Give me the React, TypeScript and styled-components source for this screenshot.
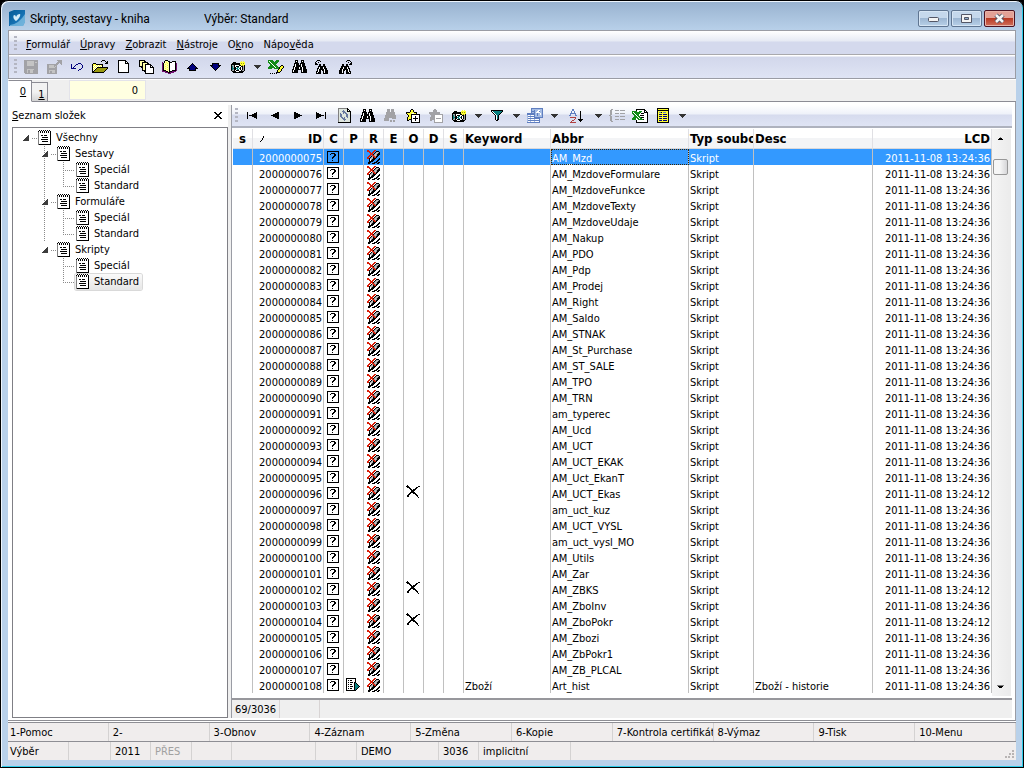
import React from 'react';
import styled, { createGlobalStyle, css } from 'styled-components';

const UI_FONT = '"DejaVu Sans Condensed", "Noto Sans", sans-serif';
const TITLE_FONT = 'Roboto, "Noto Sans", sans-serif';

const Global = createGlobalStyle`
  *, *::before, *::after { box-sizing: border-box; }
  body { margin: 0; background: #000; font: 11px/16px ${UI_FONT}; color: #000; }
  button, input { font: inherit; color: inherit; }
  svg { display: block; flex: none; }
`;

/* ---------- icons ---------- */

const PALETTE: Record<string, string> = {
  k: '#000000', w: '#ffffff', g: '#808080', l: '#c4c4c4', a: '#a2a2a6', y: '#ffff33', o: '#9a9a10',
  r: '#d81e08', b: '#00007c', t: '#0a8080', n: '#118a18', p: '#70106e', s: '#5f7ec0', c: '#a5bce4', d: '#b04040',
  v: '#ffffa8', m: '#dfe6df', q: '#6878a0',
};

// Odd widths and even heights keep centred icons on whole pixels inside the buttons.
const PixelIcon = ({ rows, mono }: { rows: string; mono?: string }) => {
  const lines = rows.trim().split(/\s+/);
  const drawn = Math.max(...lines.map((l) => l.length));
  const width = drawn + ((drawn + 1) % 2);
  const height = lines.length + (lines.length % 2);
  const rects: React.ReactNode[] = [];
  lines.forEach((line, y) => {
    for (let x = 0; x < line.length;) {
      const ch = line[x];
      let end = x + 1;
      while (line[end] === ch) end += 1;
      if (PALETTE[ch]) {
        const fill = mono && ch !== 'w' ? mono : PALETTE[ch];
        rects.push(<rect key={`${x}-${y}`} x={x} y={y} width={end - x} height={1} fill={fill} />);
      }
      x = end;
    }
  });
  return (
    <svg width={width} height={height} viewBox={`0 0 ${width} ${height}`} shapeRendering="crispEdges" aria-hidden="true">
      {rects}
    </svg>
  );
};

const SAVE = `
aaaaaaaaaaaaaa
aaalllllllaaaa
aaalllllllalla
aaalllllllaaaa
aaalllllllaaaa
aaalllllllaaaa
aaaaaaaaaaaaaa
aaaaaaaaaaaaaa
aaaaaaaaaaaaaa
aaalllllllaaaa
aaalaalllaaaaa
aaalaalllaaaaa
aaalaalllaaaaa
.aaaaaaaaaaaaa`;
const SAVE_OUT = `
..........aaaaa
...........aaaa
..........aaaaa
.........aaa.aa
aaaaaaaaaaa...a
aalllllaaa.....
aalllllala.....
aallllllaa.....
aaaaaaaaaa.....
aaaaaaaaaa.....
aallllllaa.....
aalaalllaa.....
aalaalllaa.....
aaaaaaaaaa.....`;
const UNDO = `
.......bbb..
b....bb...b.
b...b......b
b..b.......b
b.b........b
bbbbb.....b.
........bb..
.......b....`;
const OPEN = `
..........kkk...
.........k...k.k
..............kk
.kkk.........kkk
kyyykkkkkkk.....
kywywywywyk.....
kwywywywywk.....
kywywkkkkkkkkkkk
kwywkooooooooook
kywkooooooooook.
kwkooooooooook..
kkooooooooook...
kkkkkkkkkkkk....`;
const NEW_DOC = `
kkkkkkkk...
kwwwwwwkk..
kwwwwwwkwk.
kwwwwwwkkkk
kwwwwwwwwwk
kwwwwwwwwwk
kwwwwwwwwwk
kwwwwwwwwwk
kwwwwwwwwwk
kwwwwwwwwwk
kwwwwwwwwwk
kwwwwwwwwwk
kkkkkkkkkkk`;
const COPIES = `
kkkkkk.........
kvvvvkk........
kvvkkkkkk......
kvvkvvvvkk.....
kvvkvvkkkkkk...
kvvkvvkwwwwkk..
kkkkvvkwwwwkwk.
..kkvvkwwwwkkkk
...kvvkwwwwwwwk
...kvvkwwwwwwwk
...kkkkwwwwwwwk
.....kkwwwwwwwk
......kwwwwwwwk
......kkkkkkkkk`;
const BOOK = `
...kkk.........
..kvvvkk..kkkk.
p.kvyvvkkkwwwk.
pkvvvyvkwwwwwkp
pkvyvvvkwwwwwkp
pkvvvyvkwwwwwkp
pkvyvvvkwwwwwkp
pkvvvyvkwwwwwkp
pkvyvvvkwwwwwkp
pkvvvyvkwwwwwkp
pkkkvvvkwwkkkkp
ppppkkvkkkpppp.
...pppkkpppp...
......ppp......`;
const UP = `
......k......
.....kbk.....
....kbbbk....
...kbbbbbk...
..kbbbbbbbk..
.kkkbbbbbkkk.
...kbbbbbk...
...kkkkkkk...`;
const DOWN = UP.trim().split('\n').reverse().join('\n');
const CAMERA = `
..........y.y.
..kkk....yyyyy
.kkkkkkkkyoyoy
kkkkkkkkkyyyyy
kaakwwwwkkyoyk
ktakwkkkwwkkak
ktakkwttwkwkak
kttkkttwtkwkak
ktakkwttwkwkak
kaakwkkkwwkaak
.kkkkwwwkkkkk.
..kkkkkkkkkk..`;
const CARET = `
kkkkkkk
.kkkkk.
..kkk..
...k...`;
const SHEET_X = `
nnnnn...nnn.....
nwnnnn.nnnn.....
nnwnnnnnnn......
.nnwnnnnn.......
..nnwnnn........
..nnnwnnn....kk.
.nnnnnwnnn..kyyk
nnnnnnnwnnnkyyyk
nnnn..nnnnnkyyk.
..........kyyk..
.........kyyyk..
.........kyyk...
........kkkk....
..k.k.k.k.......`;
const BINOCULARS = `
...kkk...kkk...
...kwk...kwk...
...kkk...kkk...
..kkkkk.kkkkk..
..kwkkk.kwkkk..
..kwkkkkkwkkk..
.kkwkkkkkwkkkk.
.kwkkkkwkkwkkk.
.kwkkkkwkkwkkk.
kkwkkkkkkkwkkkk
kwkkkk...kwkkkk
kwkkkk...kwkkkk
kkkkkk...kkkkkk`;
const FIND_PREV = `
..kkk.........
.k...k........
k..k..........
kk............
kkk.kk..kk....
....kk..kk....
...kkkkkkkk...
...kwkkkwkk...
..kkwkkkwkkk..
..kwkkkkkwkk..
..kwkkwkkwkkk.
.kkwkk..kwkkk.
.kwkkk..kwkkk.
.kkkkk..kkkkk.`;
const FIND_NEXT = FIND_PREV.trim().split('\n').map((l) => l.split('').reverse().join('')).join('\n');
const FIND_MORE = `
...kkk.kkk..
...kkk.kkk..
...kkk.kkk..
..kkkkkkkkk.
..kkkkkkkkk.
..kkkkkkkkk.
.kkkkkkkkkkk
.kkkkkkkkkkk
.kkkkkkkkkkk
kkkkk...kkkk
kkkkk.......
kkkkk.kk.kk.
......kk.kk.`;
const PREV = `
......kk
....kkkk
..kkkkkk
kkkkkkkk
..kkkkkk
....kkkk
......kk`;
const NEXT = PREV.trim().split('\n').map((l) => l.split('').reverse().join('')).join('\n');
const FIRST = `
k........k
k......kkk
k....kkkkk
k.kkkkkkkk
k....kkkkk
k......kkk
k........k`;
const LAST = FIRST.trim().split('\n').map((l) => l.split('').reverse().join('')).join('\n');
const REFRESH = `
gggggggggk...
gmmmmmmmmkk..
gmmmmqmmmkwk.
gmmmqqqmmkkkk
gmmmmqqqmmmmk
gmqmmqmqqmmmk
gmqqmmmmqqmmk
gmqqmmmmqqmmk
gmqqmmmmqqmmk
gmmqqmqmmqmmk
gmmmqqqmmmmmk
gmmmmqqqmmmmk
gmmmmmqmmmmmk
gmmmmmmmmmmmk
kkkkkkkkkkkkk`;
const STAR_ADD = `
.....kk........
....kyyk.......
....kyyk.......
kkkkyyyykkk....
kyyyyywwyyk....
.kyyykkkkkkkkk.
..kyykwwwwwwwk.
..kyykwwwkwwwk.
.kyyykwwwkwwwk.
.kyyykwkkkkkwk.
.kykkkwwwkwwwk.
.kk..kwwwkwwwk.
.....kwwwwwwwk.
.....kkkkkkkkk.`;
const STAR_REMOVE = `
.....aa........
....aaaa.......
....aaaa.......
aaaaaaaaaaa....
aaaaaaaaaaa....
.aaaaaaaaaaaaa.
..aaaawwwwwwwa.
..aaaawwwwwwwa.
.aaaaawwwwwwwa.
.aaaaawaaaaawa.
.aaaaawwwwwwwa.
.aa..awwwwwwwa.
.....awwwwwwwa.
.....aaaaaaaaa.`;
const FILTER = `
kkkkkkkkkkkk
kwtttttttttk
.kwtttttttk.
..kwtttttk..
...kwtttk...
....kwtk....
....kwtk....
....kwtk....
....kwtk....
....kwkk....
.....kk.....`;
const WINDOWS = `
....ssssssssssss
....sccccccccccs
....sccscccwwccs
....ssssccwwsccs
....sccscwwwwccs
ssssssssccsccwcs
ssssssssccsccwcs
cwwcwwwsccsccccs
cssssssscccccccs
cwwcwwwsssssssss
cssssssssssss...
cwwcwwwcwwwws...
cssssssssssss...
cwwcwwwcwwwws...
sssssssssssss...`;
const SORT = `
....ss..........
....ss..........
...s..s.....k...
...s..s.....k...
..ssssss....k...
..s....s....k...
.ss....ss...k...
............k...
..dddddd....k...
.......d....k...
......d...kkkkk.
....dd.....kkk..
...d........k...
..dddddd........`;
const LIST = `
..aa............
.aa...aaaa.aaaaa
.aa.............
.aa.............
.aa...aaaa.aaaaa
.aa.............
aa..............
.aa...aaaa.aaaaa
.aa.............
.aa.............
.aa...aaaa.aaaaa
.aa.............
..aa............`;
const EXCEL = `
....kkkkkkkkk...
....kwwwwwwwkk..
nnnnnwwnnnwwkwk.
nwnnnnnnnwwwkkkk
nnwnnnnnwkkkwwwk
.nnwnnnwwwwwwwwk
..nnwnnwkkkkwwwk
..nnnwnnwwwwwwwk
.nnnnnwnnkkkwwwk
nnnnwnnwnnwwwwwk
nnnnwwnnnnnkwwwk
....kwwwwwwwwwwk
....kwwwwwwwwwwk
....kkkkkkkkkkkk`;
const TABLE = `
kkkkkkkkkkkk
kyyyyyyyyyyk
kkkkkkkkkkkk
kyyyyyyyyyyk
kysskysssyyk
kyyyyyyyyyyk
kybbbybbbbyk
kyyyyyyyyyyk
kybbbybbbbyk
kyyyyyyyyyyk
kybbbybbbbyk
kyyyyyyyyyyk
kybbbybbbbyk
kyyyyyyyyyyk
kkkkkkkkkkkk`;
const NOTEPAD = `
.k.k.k.k.k.k.
k.k.k.k.k.k.k
gwkwkwkwkwkwk
gwwwwwwwwwwwk
gwwwwwwwwwwwk
gwwkkwkkkwwwk
gwwwwwwwwwwwk
gwwwkkkkkkwwk
gwwwwwwwwwwwk
gwwkkkkkkkwwk
gwwwwwwwwwwwk
gwwwkkkkkkwwk
gwwwwwwwwwwwk
gwwwwwwwwwwwk
gkkkkkkkkkkkk`;
const QUESTION = `
kkkkkkkkkkkk
kwwwwwwwwwwk
kwwwkkkkwwwk
kwwkwwwkkwwk
kwwwwwwkkwwk
kwwwwwkkwwwk
kwwwwkkwwwwk
kwwwwkwwwwwk
kwwwwwwwwwwk
kwwwwkwwwwwk
kwwwwwwwwwwk
kkkkkkkkkkkk`;
const QUESTION_CLEAR = QUESTION.replace(/w/g, '.');
const READ_ONLY = `
rr.....rr.....
rrr...rr.kkk..
..rr.rr.kalak.
...rrr.kalakk.
...rrrkalakkk.
..rr.rralakk..
.rr.karrakk...
rr.kalkrrk....
rrkalakkk...k.
..kwakkk...kk.
..kwkkk...kk..
..kkkk...kk...
.kkk...kkk.kk.
.kk..kkk..kk..`;
const CROSS = `
.k............
kkk.........kk
.kkk......kk..
...kk....kk...
....kk.kkk....
.....kkkk.....
.....kkk......
....kkkkk.....
...kk..kkk....
..kk.....kk...
.kk.......kk..
.kk........k..
............k.
..............
..............
..............`;
const DOC_RUN = `
kkkkkkkkkk....
kwwwwwwwwk....
kwkwkkwwwk....
kwwwwwwwwk....
kwkwkkkwkk....
kwwwwwwwktk...
kwkwkkwwkttk..
kwwwwwwwktttk.
kwkwkkkwkttttk
kwwwwwwwktttk.
kwkwkkwwkttk..
kwwwwwwwktk...
kkkkkkkkkk....`;
const EXPANDED = `
.....k
....kk
...kkk
..kkkk
.kkkkk
kkkkkk`;
const CLOSE = `
kk....kk
.kk..kk.
..kkkk..
...kk...
..kkkk..
.kk..kk.
kk....kk`;
const SORT_MARK = `
...k..
...k..
..k...
..k...
.k....
k.....`;
const ARROW_UP = `
...g...
..kkk..
.kkkkk.`;
const ARROW_DOWN = `
ggggggg
.kkkkk.
..kkk..`;
const SIZE_DOTS = `
.......kk
.......kk
.........
....kk.kk
....kk.kk
.........
kk.kk..kk
kk.kk..kk`;

const AppLogo = () => (
  <svg width="16" height="16" viewBox="0 0 16 16" aria-hidden="true">
    <defs>
      <linearGradient id="logo" x1="0" y1="0" x2="1" y2="1">
        <stop offset="0" stopColor="#045a94" />
        <stop offset="0.6" stopColor="#1672b4" />
        <stop offset="1" stopColor="#4a9ad0" />
      </linearGradient>
    </defs>
    <path d="M0 2 L5 0 L16 0 L16 12 L14 16 L0 16Z" fill="url(#logo)" />
    <path d="M1 15 Q10 14 16 4 L16 12 L14 16 L1 16Z" fill="#7dbce0" opacity=".8" />
    <path d="M7 11 C4 9 4 6 5 5 Q7 5 7 7 Q8 4 11 4 C12 5 10 9 7 11Z" fill="#d4ecf8" />
  </svg>
);

/* ---------- window frame ---------- */

const Window = styled.div`
  min-height: 100vh;
  display: flex;
  flex-direction: column;
  padding: 0 7px 7px;
  border: 1px solid #000;
  border-radius: 8px 8px 0 0;
  background: linear-gradient(#98b2cf 0, #b9d1ea 30px) #b9d1ea;
  box-shadow: inset 1px 1px 0 #eef5fc, inset -1px -1px 0 #2bcbe8;
`;
const TitleBar = styled.header`
  display: flex;
  height: 29px;
  padding: 5px 0 0 1px;
  align-items: center;
  font: 12px/16px ${TITLE_FONT};
`;
const Title = styled.h1`
  width: 174px;
  margin: 0 0 0 5px;
  padding-top: 2px;
  font: inherit;
`;
const Selection = styled.span`
  flex: 1;
  padding-top: 2px;
`;
const WindowButtons = styled.div`
  display: flex;
  gap: 2px;
  padding-right: 1px;
`;
const WindowButton = styled.button<{ $danger?: boolean }>`
  width: 31px;
  height: 17px;
  padding: 0;
  display: grid;
  place-items: center;
  border: 1px solid ${(p) => (p.$danger ? '#4c1322' : '#5f7591')};
  border-radius: 2px;
  background: ${(p) => (p.$danger
    ? 'linear-gradient(#e3a196 0 45%, #b93a24 50%, #d0705c)'
    : 'linear-gradient(#c5d8ec 0 45%, #9db7d3 50%, #b8d0e8)')};
  box-shadow: inset 0 0 0 1px ${(p) => (p.$danger ? '#e9b3a8' : '#d6e5f4')};
`;
const Client = styled.div`
  flex: 1;
  display: flex;
  flex-direction: column;
  background: #fff;
`;

/* ---------- bars ---------- */

const Bars = styled.div`
  border: 1px solid #9a9ca4;
`;
const MenuBar = styled.nav`
  height: 24px;
  display: flex;
  align-items: center;
  padding: 3px 0 0 5px;
  border-bottom: 1px solid #a9a9ad;
  background: linear-gradient(#fff 0, #e6eaf4 10px, #d4d9ed 11px);
`;
const Grip = styled.span`
  width: 3px;
  height: 16px;
  margin-right: 3px;
  background: repeating-linear-gradient(#b4b6c2 0 2px, transparent 2px 4px);
`;
const MenuItem = styled.button`
  padding: 2px 0 0;
  margin: 0 4px 0 6px;
  border: 0;
  background: none;
`;
const ToolBar = styled.div<{ $inner?: boolean }>`
  height: 23px;
  display: flex;
  align-items: flex-start;
  padding: ${(p) => (p.$inner ? '1px 0 0 3px' : '2px 0 0 5px')};
  border-bottom: ${(p) => (p.$inner ? 2 : 0)}px solid #aeb2be;
  background: ${(p) => (p.$inner
    ? 'linear-gradient(#fff 0, #eef1f9 9px, #d6dbee 10px, #dfe4f4)'
    : 'linear-gradient(#fff 0 1px, #d2d7eb 2px, #dfe4f4)')};
  ${Grip} { margin-top: 2px; }
`;
const ToolButton = styled.button<{ $kind?: 'caret' | 'wide' }>`
  width: ${(p) => (p.$kind === 'caret' ? 15 : p.$kind === 'wide' ? 29 : 23)}px;
  height: 20px;
  padding: 0;
  display: grid;
  place-items: center;
  border: 0;
  background: none;
`;
const TabStrip = styled.div`
  height: 22px;
  display: flex;
  align-items: flex-end;
  margin-top: 1px;
  background: #efefef;
  box-shadow: inset 0 -1px 0 #8c8c94;
`;
const Tab = styled.button<{ $active?: boolean }>`
  width: ${(p) => (p.$active ? 24 : 16)}px;
  height: ${(p) => (p.$active ? 22 : 20)}px;
  padding: ${(p) => (p.$active ? '2px 1px 0 7px' : '4px 0 0 4px')};
  border: 1px solid #8c8c94;
  border-left-width: ${(p) => (p.$active ? 1 : 0)}px;
  border-left-color: #fff;
  border-bottom-color: ${(p) => (p.$active ? '#fff' : '#8c8c94')};
  background: ${(p) => (p.$active ? '#fff' : 'linear-gradient(#f2f2f2 50%, #d4d4d4)')};
`;
const RecordInput = styled.input`
  width: 77px;
  height: 20px;
  align-self: flex-start;
  margin-left: 21px;
  padding: 0 7px 0 0;
  border: 1px solid #e3e3ea;
  background: #ffffe1;
  text-align: right;
`;

/* ---------- workspace ---------- */

const Workspace = styled.main`
  flex: 1;
  display: grid;
  grid-template-columns: 220px 3px 1fr;
  padding: 3px 3px 2px 0;
  border-right: 1px solid #9a9ca4;
  border-bottom: 1px solid #8e8e94;
`;
const Folders = styled.section`
  display: flex;
  flex-direction: column;
  padding-left: 4px;
`;
const FoldersHead = styled.div`
  height: 22px;
  display: flex;
  align-items: center;
  justify-content: space-between;
  padding-right: 5px;
`;
const FoldersTitle = styled.h2`
  margin: 0;
  font: inherit;
`;
const CloseButton = styled.button`
  padding: 0;
  border: 0;
  background: none;
`;
const TreeBox = styled.div`
  flex: 1;
  padding: 2px 0 0 10px;
  border: 1px solid #7f7f85;
`;
const TreeList = styled.ul`
  list-style: none;
  margin: 0;
  padding: 0;
`;
const Branch = styled.li<{ $guide?: boolean }>`
  margin: 0 0 0 19px;
  background: ${(p) => (p.$guide
    ? 'repeating-linear-gradient(#8a8a8a 0 1px, transparent 1px 2px) 2px 0 / 1px 100% no-repeat' : 'none')};
`;
const TreeRow = styled.div<{ $level: number }>`
  height: 16px;
  display: flex;
  align-items: center;
  ${(p) => p.$level === 2 && css`
    margin-left: 21px;
    background: repeating-linear-gradient(90deg, #8a8a8a 0 1px, transparent 1px 2px) 0 8px / 12px 1px no-repeat,
      repeating-linear-gradient(#8a8a8a 0 1px, transparent 1px 2px) 0 0 / 1px 100% no-repeat;
    padding-left: 12px;
  `}
`;
const LastRow = styled(TreeRow)`
  background-size: 12px 1px, 1px 8px;
`;
const Twisty = styled.span`
  width: 14px;
  display: flex;
  align-items: center;
  &::after {
    content: '';
    width: 5px;
    height: 1px;
    margin-left: 2px;
    background: repeating-linear-gradient(90deg, #8a8a8a 0 1px, transparent 1px 2px);
  }
`;
const TreeItem = styled.button<{ $selected?: boolean }>`
  height: 16px;
  display: flex;
  align-items: center;
  gap: 5px;
  padding: 0 3px 0 1px;
  border: 0;
  border-radius: 2px;
  background: ${(p) => (p.$selected ? 'linear-gradient(#fafafa, #e6e6e6)' : 'none')};
  box-shadow: ${(p) => (p.$selected ? '0 0 0 1px #d9d9d9' : 'none')};
`;
const Splitter = styled.div`background: #efefef;`;
const Records = styled.section`
  display: flex;
  flex-direction: column;
  min-width: 0;
  border-left: 1px solid #9a9ca4;
`;
const GridArea = styled.div`
  flex: 1;
  display: flex;
  padding: 1px 1px 2px;
  border-bottom: 2px solid #97979c;
`;
const Grid = styled.table`
  flex: 1;
  width: 100%;
  align-self: flex-start;
  table-layout: fixed;
  border-collapse: separate;
  border-spacing: 0;
`;
const Head = styled.th<{ $align?: string }>`
  height: 20px;
  padding: 1px 1px 0;
  overflow: hidden;
  white-space: nowrap;
  text-align: ${(p) => p.$align || 'left'};
  font: bold 13px/18px ${UI_FONT};
  border-right: 1px solid #e0e0e4;
  border-bottom: 1px solid #d8d8dc;
  background: linear-gradient(#fff 50%, #f3f4f6 50%);
`;
const IdHead = styled.span`
  display: flex;
  align-items: center;
  justify-content: space-between;
  padding-left: 6px;
`;
const Row = styled.tr<{ $selected?: boolean }>`
  height: 16px;
  background: ${(p) => (p.$selected ? '#3399ff' : '#fff')};
  color: ${(p) => (p.$selected ? '#fff' : '#000')};
`;
const Cell = styled.td<{ $right?: boolean; $focus?: boolean }>`
  height: 16px;
  padding: 3px 1px 0;
  overflow: hidden;
  white-space: nowrap;
  line-height: 13px;
  text-align: ${(p) => (p.$right ? 'right' : 'left')};
  border-right: 1px solid #c0c0c0;
  ${(p) => p.$focus && css`outline: 1px dotted #3a2400; outline-offset: -1px;`}
`;
const IconCell = styled(Cell)`
  padding: 0 0 0 3px;
`;
const CrossCell = styled(IconCell)`
  padding-left: 2px;
`;
const ScrollBar = styled.div`
  width: 19px;
  display: flex;
  flex-direction: column;
  align-items: center;
  justify-content: space-between;
  padding: 8px 2px 7px 0;
  background: linear-gradient(90deg, #f4f4f4, #ebebeb);
`;
const ScrollTop = styled.div`
  display: flex;
  flex-direction: column;
  align-items: center;
  gap: 18px;
`;
const Thumb = styled.div`
  width: 15px;
  height: 16px;
  border: 1px solid #979797;
  border-radius: 2px;
  background: linear-gradient(90deg, #f6f6f6 45%, #d6d6d8);
`;
const Counter = styled.div`
  height: 18px;
  display: flex;
  line-height: 20px;
  background: #efefef;
`;
const CounterCell = styled.span<{ $w: number }>`
  width: ${(p) => p.$w}px;
  padding-left: 3px;
  border-right: 1px solid #d8d4d4;
`;

/* ---------- bottom bars ---------- */

const FunctionBar = styled.div`
  height: 20px;
  display: grid;
  grid-template-columns: repeat(10, minmax(0, 1fr));
  margin-top: 1px;
  border-top: 1px solid #8e8e94;
  border-bottom: 1px solid #8e8e94;
  background: #f0eded;
`;
const FunctionKey = styled.button`
  padding: 2px 0 0 4px;
  overflow: hidden;
  white-space: nowrap;
  text-align: left;
  border: 0;
  border-right: 1px solid #d4d2d2;
  background: none;
  &:first-child { padding-left: 2px; }
`;
const StatusBar = styled.footer`
  height: 18px;
  display: flex;
  align-items: stretch;
  line-height: 20px;
  background: #f0eded;
`;
const StatusCell = styled.span<{ $w?: number; $dim?: boolean }>`
  ${(p) => (p.$w ? css`width: ${p.$w}px; border-right: 1px solid #d4d2d2;` : css`flex: 1;`)}
  padding-left: 4px;
  color: ${(p) => (p.$dim ? '#a0a0a0' : 'inherit')};
  &:first-child { padding-left: 2px; }
`;
const SizeGrip = styled.span`
  align-self: flex-end;
  padding: 0 2px 2px 0;
`;

/* ---------- data ---------- */

const MENU: [string, string, string][] = [
  ['', 'F', 'ormulář'], ['', 'Ú', 'pravy'], ['', 'Z', 'obrazit'],
  ['', 'N', 'ástroje'], ['O', 'k', 'no'], ['Nápo', 'v', 'ěda'],
];

type Tool = { label: string; art: string; kind?: 'caret' | 'wide'; mono?: string };
const MAIN_TOOLS: Tool[] = [
  { label: 'Uložit', art: SAVE }, { label: 'Uložit a zavřít', art: SAVE_OUT }, { label: 'Zpět', art: UNDO },
  { label: 'Otevřít', art: OPEN }, { label: 'Nový', art: NEW_DOC }, { label: 'Kopie', art: COPIES },
  { label: 'Kniha', art: BOOK }, { label: 'Nahoru', art: UP }, { label: 'Dolů', art: DOWN },
  { label: 'Snímek', art: CAMERA }, { label: 'Možnosti snímku', art: CARET, kind: 'caret', mono: '#333' },
  { label: 'Upravit', art: SHEET_X }, { label: 'Hledat', art: BINOCULARS },
  { label: 'Hledat předchozí', art: FIND_PREV }, { label: 'Hledat další', art: FIND_NEXT },
];
const GRID_TOOLS: Tool[] = [
  { label: 'První', art: FIRST }, { label: 'Předchozí', art: PREV }, { label: 'Další', art: NEXT },
  { label: 'Poslední', art: LAST }, { label: 'Obnovit', art: REFRESH }, { label: 'Hledat', art: BINOCULARS },
  { label: 'Hledat další', art: FIND_MORE, mono: '#a2a2a6' }, { label: 'Přidat', art: STAR_ADD },
  { label: 'Odebrat', art: STAR_REMOVE }, { label: 'Snímek', art: CAMERA },
  { label: 'Možnosti snímku', art: CARET, kind: 'caret', mono: '#333' }, { label: 'Filtr', art: FILTER },
  { label: 'Možnosti filtru', art: CARET, kind: 'caret', mono: '#333' }, { label: 'Okna', art: WINDOWS },
  { label: 'Možnosti oken', art: CARET, kind: 'caret', mono: '#333' }, { label: 'Seřadit', art: SORT, kind: 'wide' },
  { label: 'Možnosti řazení', art: CARET, kind: 'caret', mono: '#333' }, { label: 'Seznam', art: LIST },
  { label: 'Excel', art: EXCEL }, { label: 'Sloupce', art: TABLE },
  { label: 'Možnosti sloupců', art: CARET, kind: 'caret', mono: '#333' },
];

const FOLDERS = ['Sestavy', 'Formuláře', 'Skripty'];

const NAMES = [
  'AM_Mzd', 'AM_MzdoveFormulare', 'AM_MzdoveFunkce', 'AM_MzdoveTexty', 'AM_MzdoveUdaje', 'AM_Nakup', 'AM_PDO',
  'AM_Pdp', 'AM_Prodej', 'AM_Right', 'AM_Saldo', 'AM_STNAK', 'AM_St_Purchase', 'AM_ST_SALE', 'AM_TPO', 'AM_TRN',
  'am_typerec', 'AM_Ucd', 'AM_UCT', 'AM_UCT_EKAK', 'AM_Uct_EkanT', 'AM_UCT_Ekas', 'am_uct_kuz', 'AM_UCT_VYSL',
  'am_uct_vysl_MO', 'AM_Utils', 'AM_Zar', 'AM_ZBKS', 'AM_ZboInv', 'AM_ZboPokr', 'AM_Zbozi', 'AM_ZbPokr1',
  'AM_ZB_PLCAL', 'Art_hist',
];
const CHANGED_LATER = ['AM_UCT_Ekas', 'AM_ZBKS', 'AM_ZboPokr'];
const RECORDS = NAMES.map((abbr, i) => ({
  id: 2000000075 + i,
  abbr,
  crossed: CHANGED_LATER.includes(abbr),
  runnable: abbr === 'Art_hist',
  keyword: abbr === 'Art_hist' ? 'Zboží' : '',
  desc: abbr === 'Art_hist' ? 'Zboží - historie' : '',
  changed: `2011-11-08 13:24:${CHANGED_LATER.includes(abbr) ? '12' : '36'}`,
}));

const COLUMNS = [20, 71, 20, 20, 20, 20, 20, 20, 20, 87, 138, 65, 0, 119];
const FUNCTIONS = ['1-Pomoc', '2-', '3-Obnov', '4-Záznam', '5-Změna', '6-Kopie', '7-Kontrola certifikátů', '8-Výmaz', '9-Tisk', '10-Menu'];
const STATUS: { text?: string; w: number; dim?: boolean }[] = [
  { text: 'Výběr', w: 61 }, { w: 42 }, { text: '2011', w: 40 }, { text: 'PŘES', w: 41, dim: true }, { w: 40 },
  { w: 84 }, { w: 41 }, { text: 'DEMO', w: 82 }, { text: '3036', w: 40 }, { text: 'implicitní', w: 92 },
];

const Tools = ({ items }: { items: Tool[] }) => (
  <>
    {items.map((t, i) => (
      <ToolButton key={i} aria-label={t.label} $kind={t.kind}>
        <PixelIcon rows={t.art} mono={t.mono} />
      </ToolButton>
    ))}
  </>
);

const FolderTree = () => (
  <TreeBox>
    <TreeList>
      <li>
        <TreeRow $level={0}>
          <Twisty><PixelIcon rows={EXPANDED} mono="#3c3c3c" /></Twisty>
          <TreeItem><PixelIcon rows={NOTEPAD} />Všechny</TreeItem>
        </TreeRow>
        <TreeList>
          {FOLDERS.map((name, i) => (
            <Branch key={name} $guide={i < FOLDERS.length - 1}>
              <TreeRow $level={1}>
                <Twisty><PixelIcon rows={EXPANDED} mono="#3c3c3c" /></Twisty>
                <TreeItem><PixelIcon rows={NOTEPAD} />{name}</TreeItem>
              </TreeRow>
              <TreeRow $level={2}><TreeItem><PixelIcon rows={NOTEPAD} />Speciál</TreeItem></TreeRow>
              <LastRow $level={2}>
                <TreeItem $selected={name === 'Skripty'}><PixelIcon rows={NOTEPAD} />Standard</TreeItem>
              </LastRow>
            </Branch>
          ))}
        </TreeList>
      </li>
    </TreeList>
  </TreeBox>
);

const RecordGrid = () => (
  <Grid>
    <colgroup>
      {COLUMNS.map((w, i) => <col key={i} width={w || undefined} />)}
    </colgroup>
    <thead>
      <tr>
        <Head $align="center">s</Head>
        <Head><IdHead><PixelIcon rows={SORT_MARK} />ID</IdHead></Head>
        {['C', 'P', 'R', 'E', 'O', 'D', 'S'].map((c) => <Head key={c} $align="center">{c}</Head>)}
        <Head>Keyword</Head>
        <Head>Abbr</Head>
        <Head>Typ souboru</Head>
        <Head>Desc</Head>
        <Head $align="right">LCD</Head>
      </tr>
    </thead>
    <tbody>
      {RECORDS.map((r, i) => (
        <Row key={r.id} $selected={i === 0}>
          <Cell />
          <Cell $right>{r.id}</Cell>
          <IconCell><PixelIcon rows={i === 0 ? QUESTION_CLEAR : QUESTION} /></IconCell>
          <CrossCell>{r.runnable && <PixelIcon rows={DOC_RUN} />}</CrossCell>
          <IconCell><PixelIcon rows={READ_ONLY} /></IconCell>
          <Cell />
          <CrossCell>{r.crossed && <PixelIcon rows={CROSS} />}</CrossCell>
          <Cell />
          <Cell />
          <Cell>{r.keyword}</Cell>
          <Cell $focus={i === 0}>{r.abbr}</Cell>
          <Cell>Skript</Cell>
          <Cell>{r.desc}</Cell>
          <Cell $right>{r.changed}</Cell>
        </Row>
      ))}
    </tbody>
  </Grid>
);

export default function App() {
  return (
    <>
      <Global />
      <Window>
        <TitleBar>
          <AppLogo />
          <Title>Skripty, sestavy - kniha</Title>
          <Selection>Výběr: Standard</Selection>
          <WindowButtons>
            <WindowButton aria-label="Minimalizovat">
              <svg width="13" height="7"><rect x="1.500" y="2.500" width="10" height="4" rx="1" fill="#f4f4f4" stroke="#535666" /></svg>
            </WindowButton>
            <WindowButton aria-label="Maximalizovat">
              <svg width="11" height="9">
                <path d="M.5 .5h10v8H.5z" fill="#f4f4f4" stroke="#535666" />
                <path d="M3.500 3.500h4v2h-4z" fill="#8eaccb" stroke="#535666" />
              </svg>
            </WindowButton>
            <WindowButton $danger aria-label="Zavřít">
              <svg width="13" height="11" viewBox="0 0 13 11">
                <path d="M3 2 L10 9 M10 2 L3 9" stroke="#535666" strokeWidth="4.500" />
                <path d="M3 2 L10 9 M10 2 L3 9" stroke="#f6f6f6" strokeWidth="2.500" />
              </svg>
            </WindowButton>
          </WindowButtons>
        </TitleBar>
        <Client>
          <Bars>
            <MenuBar>
              <Grip />
              {MENU.map(([pre, key, post]) => (
                <MenuItem key={key}>{pre}<u>{key}</u>{post}</MenuItem>
              ))}
            </MenuBar>
            <ToolBar>
              <Grip />
              <Tools items={MAIN_TOOLS} />
            </ToolBar>
          </Bars>
          <TabStrip>
            <Tab $active><u>0</u></Tab>
            <Tab><u>1</u></Tab>
            <RecordInput aria-label="Záznam" defaultValue="0" />
          </TabStrip>
          <Workspace>
            <Folders>
              <FoldersHead>
                <FoldersTitle><u>S</u>eznam složek</FoldersTitle>
                <CloseButton aria-label="Zavřít seznam"><PixelIcon rows={CLOSE} /></CloseButton>
              </FoldersHead>
              <FolderTree />
            </Folders>
            <Splitter />
            <Records>
              <ToolBar $inner>
                <Grip />
                <Tools items={GRID_TOOLS} />
              </ToolBar>
              <GridArea>
                <RecordGrid />
                <ScrollBar>
                  <ScrollTop>
                    <PixelIcon rows={ARROW_UP} />
                    <Thumb />
                  </ScrollTop>
                  <PixelIcon rows={ARROW_DOWN} />
                </ScrollBar>
              </GridArea>
              <Counter>
                <CounterCell $w={48}>69/3036</CounterCell>
                <CounterCell $w={40} />
              </Counter>
            </Records>
          </Workspace>
          <FunctionBar>
            {FUNCTIONS.map((f) => <FunctionKey key={f}>{f}</FunctionKey>)}
          </FunctionBar>
          <StatusBar>
            {STATUS.map((s, i) => <StatusCell key={i} $w={s.w} $dim={s.dim}>{s.text}</StatusCell>)}
            <StatusCell />
            <SizeGrip>
              <PixelIcon mono="#b8b4b4" rows={SIZE_DOTS} />
            </SizeGrip>
          </StatusBar>
        </Client>
      </Window>
    </>
  );
}
